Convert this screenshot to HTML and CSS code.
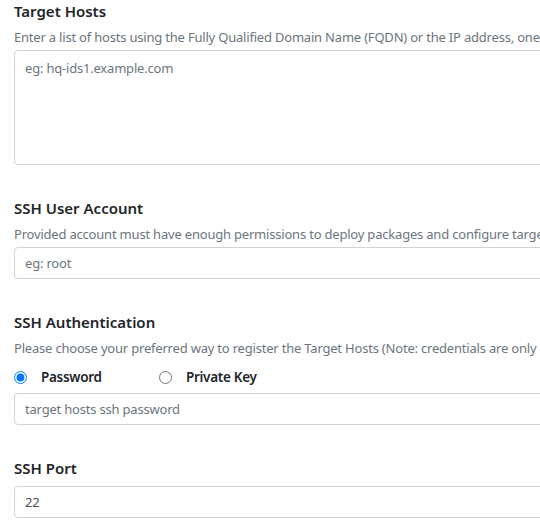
FILE: index.html
```html
<!DOCTYPE html>
<html lang="en">
<head>
<meta charset="utf-8">
<title>Target Hosts</title>
<link rel="stylesheet" href="styles.css">
</head>
<body>
<form class="form">
  <section class="group">
    <h3 class="label">Target Hosts</h3>
    <p class="help">Enter a list of hosts using the Fully Qualified Domain Name (FQDN) or the IP address, one</p>
    <textarea class="control area" placeholder="eg: hq-ids1.example.com"></textarea>
  </section>
  <section class="group">
    <h3 class="label">SSH User Account</h3>
    <p class="help">Provided account must have enough permissions to deploy packages and configure target</p>
    <input class="control" type="text" placeholder="eg: root">
  </section>
  <section class="group">
    <h3 class="label">SSH Authentication</h3>
    <p class="help">Please choose your preferred way to register the Target Hosts (Note: credentials are only</p>
    <div class="radios">
      <label class="option"><input type="radio" name="auth" checked><span>Password</span></label>
      <label class="option"><input type="radio" name="auth"><span>Private Key</span></label>
    </div>
    <input class="control" type="password" placeholder="target hosts ssh password">
  </section>
  <section class="group">
    <h3 class="label label-tight">SSH Port</h3>
    <input class="control" type="text" value="22">
  </section>
</form>
</body>
</html>
```
FILE: styles.css
```css
html, body {
  margin: 0;
  padding: 0;
  overflow: hidden;
  background: #fff;
}
body {
  font-family: "Noto Sans", "Open Sans", sans-serif;
  color: #212529;
}
.form {
  width: 900px;
  padding: 0 0 0 14px;
  display: flex;
  flex-direction: column;
  gap: 32px;
}
.group {
  display: flex;
  flex-direction: column;
}
.label {
  margin: 0;
  font-size: 15px;
  line-height: 23px;
  font-weight: 600;
  color: #212529;
}
.label-tight {
  margin-bottom: 6px;
}
.help {
  margin: 4px 0 3px;
  font-size: 13px;
  line-height: 20px;
  letter-spacing: -0.2px;
  color: #6c757d;
  white-space: nowrap;
}
.control {
  box-sizing: border-box;
  width: 100%;
  height: 32px;
  margin: 0;
  padding: 5px 10px;
  font-family: inherit;
  font-size: 13px;
  line-height: 20px;
  letter-spacing: -0.2px;
  color: #495057;
  border: 1px solid #ced4da;
  border-radius: 4px;
  background: #fff;
  outline: none;
}
.control::placeholder {
  color: #6c757d;
  opacity: 1;
}
.area {
  height: 115px;
  padding-top: 7px;
  resize: none;
  display: block;
}
.radios {
  display: flex;
  align-items: center;
  height: 24px;
  margin: 4px 0 4px;
}
.option {
  display: flex;
  align-items: center;
  width: 145px;
  font-size: 13.5px;
  letter-spacing: -0.3px;
  font-weight: 600;
  color: #212529;
}
.option input {
  width: 13px;
  height: 13px;
  margin: 0 14px 0 0;
}
```
